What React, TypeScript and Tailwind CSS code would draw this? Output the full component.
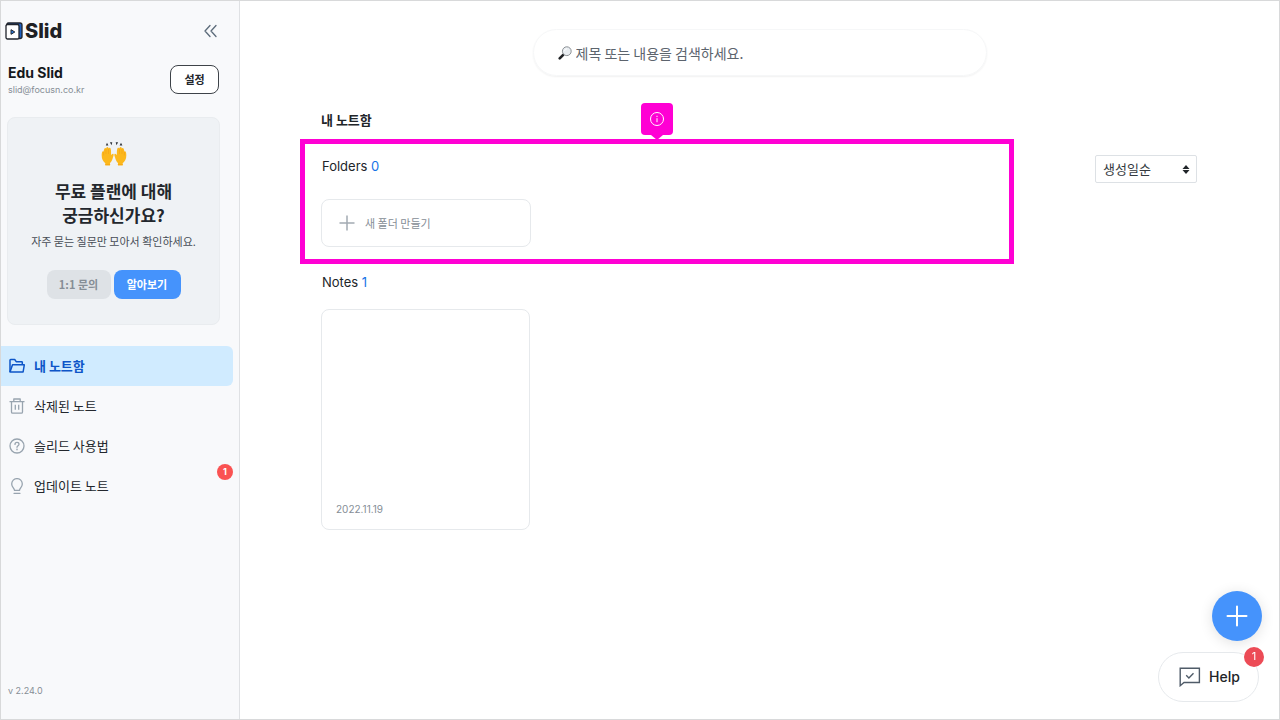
import React from 'react';

const LogoMark: React.FC = () => (
  <svg width="18" height="18" viewBox="0 0 18 18" fill="none" aria-hidden="true">
    <path d="M3.500 1h11.500q2 0 2 2v11.500q0 2-2 2H13V4H1.500Q1.500 1 3.500 1z" fill="#1d5fc0" stroke="#20242c" strokeWidth="1.300" strokeLinejoin="round" />
    <rect x="1" y="2.500" width="13" height="14.500" rx="1.500" fill="#fff" stroke="#20242c" strokeWidth="1.300" />
    <path d="M6 7.700v4.600l3.800-2.300z" fill="#2b7de0" stroke="#20242c" strokeWidth="1" strokeLinejoin="round" />
  </svg>
);

const CollapseIcon: React.FC = () => (
  <svg width="14" height="14" viewBox="0 0 14 14" fill="none" stroke="#5c6b7a" strokeWidth="1.300" strokeLinecap="round" strokeLinejoin="round" aria-hidden="true">
    <path d="M6 1.500 1 7l5 5.500M12 1.500 7 7l5 5.500" />
  </svg>
);

const RaisedHands: React.FC = () => (
  <svg width="26" height="26" viewBox="0 0 26 26" aria-hidden="true">
    <g fill="#30343a">
      <path d="m4.800 4.600 1.200-2.800 1.400 2.600zM8.900 1.200l2.400.1-.8 2.900zM14.700 1.300l2.400-.1-1.600 3zM18.600 4.400 20 1.800l1.400 2.800z" />
    </g>
    <path d="M4.300 24.500v-2.300C2.200 20.500.6 18 .7 14.500c0-1.800.1-3.300.8-4 .5-.5 1-.1 1.100.4.1-1.500.6-3.700 1.500-3.800.7-.1.9.4.9 1 .2-1.100.6-2 1.400-2 .8 0 1.100.8 1.100 1.600.3-.7.8-1.200 1.400-1 1.400.4 1.200 4.400 1.200 7.600.4-.7 1.200-1.800 2-1.600 1.100.3.3 2.200-.1 3.500-.6 2.300-1.500 4.500-3 5.800v2.500z" fill="#fcb81c" />
    <path d="M21.700 24.500v-2.300c2.100-1.700 3.700-4.200 3.600-7.700 0-1.800-.1-3.300-.8-4-.5-.5-1-.1-1.100.4-.1-1.500-.6-3.700-1.500-3.800-.7-.1-.9.4-.9 1-.2-1.100-.6-2-1.400-2-.8 0-1.100.8-1.100 1.600-.3-.7-.8-1.200-1.400-1-1.400.4-1.200 4.400-1.200 7.600-.4-.7-1.200-1.800-2-1.600-1.100.3-.3 2.200.1 3.500.6 2.300 1.500 4.500 3 5.800v2.500z" fill="#fcb81c" />
    <path d="M2.600 11v3M5 8.500v4M7.500 8v4.500M23.400 11v3M21 8.500v4M18.500 8v4.500M4.500 23.500h4.300M17.200 23.500h4.300" stroke="#f5a316" strokeWidth=".7" strokeLinecap="round" fill="none" />
  </svg>
);

const SearchGlass: React.FC = () => (
  <svg className="shrink-0" width="14" height="14" viewBox="0 0 14 14" fill="none" aria-hidden="true">
    <path d="M5.200 8.800 1.700 12.300" stroke="#202225" strokeWidth="2.600" strokeLinecap="round" />
    <circle cx="8.800" cy="5.200" r="4.400" fill="#e9edf1" stroke="#8b9095" strokeWidth="1" />
    <path d="M6.500 4.600a2.400 2.400 0 0 1 2.200-1.800" stroke="#fff" strokeWidth="1" strokeLinecap="round" />
  </svg>
);

const FolderIcon: React.FC = () => (
  <svg width="16" height="16" viewBox="0 0 16 16" fill="none" stroke="#0d55c8" strokeWidth="1.500" strokeLinejoin="round" aria-hidden="true">
    <path d="M1 14V2.200q0-.7.700-.7h4l1.500 2.200h5.500q.6 0 .6.600v2.500" />
    <path d="M1 14 3.500 6.800H15.300l-1.200 7.200z" />
  </svg>
);

const TrashIcon: React.FC = () => (
  <svg width="16" height="16" viewBox="0 0 16 16" fill="none" stroke="#98a4af" strokeWidth="1.300" strokeLinejoin="round" aria-hidden="true">
    <path d="M.5 3.700h15M4.800 3.500V1h6.400v2.500M2.500 3.700v10.300q0 1.200 1.200 1.200h8.600q1.200 0 1.200-1.200V3.700M6.300 6.700v5M9.700 6.700v5" />
  </svg>
);

const QuestionIcon: React.FC = () => (
  <svg width="16" height="16" viewBox="0 0 16 16" fill="none" stroke="#98a4af" strokeWidth="1.300" strokeLinecap="round" aria-hidden="true">
    <circle cx="8" cy="8" r="7" />
    <path d="M6 6.400c0-1.300.8-2 2-2s2 .7 2 1.800c0 1.400-2 1.500-2 3.100" />
    <circle cx="8" cy="11.400" r=".3" />
  </svg>
);

const BulbIcon: React.FC = () => (
  <svg width="16" height="16" viewBox="0 0 16 16" fill="none" stroke="#98a4af" strokeWidth="1.300" strokeLinecap="round" strokeLinejoin="round" aria-hidden="true">
    <path d="M5.500 12.400c0-2.100-2.800-3.300-2.800-6.500a5.300 5.300 0 0 1 10.600 0c0 3.200-2.800 4.400-2.800 6.500zM5 15.300h6" />
  </svg>
);

const InfoIcon: React.FC = () => (
  <svg width="16" height="16" viewBox="0 0 16 16" fill="none" stroke="#fff" strokeWidth="1" aria-hidden="true">
    <circle cx="8" cy="8" r="6.500" />
    <path d="M8 7.200v4M8 4.800v1.200" />
  </svg>
);

const ChatIcon: React.FC = () => (
  <svg width="22" height="20" viewBox="0 0 22 20" fill="none" stroke="#4f5b68" strokeWidth="1.400" aria-hidden="true">
    <path d="M1.200 1.200h19.200v14.300H5l-3.800 3.200z" />
    <path d="m7.200 8.300 2.700 2.600 4.600-4.600" />
  </svg>
);

const NAV_ITEMS = [
  { label: '내 노트함', icon: <FolderIcon />, active: true },
  { label: '삭제된 노트', icon: <TrashIcon /> },
  { label: '슬리드 사용법', icon: <QuestionIcon /> },
  { label: '업데이트 노트', icon: <BulbIcon />, badge: 1 },
];

const Sidebar: React.FC = () => (
  <aside className="flex w-[239px] shrink-0 flex-col border-r border-[#dfe1e4] bg-[#f8f9fb]">
    <div className="flex items-center justify-between pt-5 pr-[21px] pl-1">
      <a href="#" className="flex items-center gap-[2px] font-['Inter',sans-serif] text-xl leading-5 font-extrabold text-[#202124]">
        <LogoMark />
        Slid
      </a>
      <button type="button" aria-label="사이드바 접기">
        <CollapseIcon />
      </button>
    </div>

    <div className="mt-6 flex items-start justify-between pr-5 pl-[7px]">
      <div className="font-['Inter',sans-serif]">
        <p className="text-sm leading-4 font-bold text-[#15181c]">Edu Slid</p>
        <p className="mt-[2px] text-[9px] leading-[14px] text-[#868e96]">slid@focusn.co.kr</p>
      </div>
      <button type="button" className="h-[29px] w-[49px] rounded-lg border border-[#3e4349] bg-white text-[11px] font-bold text-[#23272d]">
        설정
      </button>
    </div>

    <section className="mt-5 mr-[19px] ml-[6px] flex flex-col items-center rounded-lg border border-[#e9ecef] bg-[#eff2f5] pt-[23px] pb-[25px] text-center">
      <RaisedHands />
      <h2 className="mt-3 text-[17px] leading-6 font-bold text-[#23272d]">
        무료 플랜에 대해
        <br />
        궁금하신가요?
      </h2>
      <p className="mt-1 text-[11px] leading-5 text-[#474d55]">자주 묻는 질문만 모아서 확인하세요.</p>
      <div className="mt-[19px] flex gap-[3px] text-[11px] font-bold">
        <button type="button" className="h-[29px] w-16 rounded-lg bg-[#dee2e6] text-[#868e96]">
          1:1 문의
        </button>
        <button type="button" className="h-[29px] w-[67px] rounded-lg bg-[#4593fc] text-white">
          알아보기
        </button>
      </div>
    </section>

    <nav className="mt-[21px] mr-[6px] flex flex-col">
      {NAV_ITEMS.map((item) => (
        <a
          key={item.label}
          href="#"
          className={`relative flex h-10 items-center gap-[9px] rounded-r-md pl-2 text-[13px] ${
            item.active ? 'bg-[#d0ebff] font-bold text-[#0d55c8]' : 'text-[#23272d]'
          }`}
        >
          {item.icon}
          {item.label}
          {item.badge && (
            <span className="absolute -top-[2px] right-0 flex size-4 items-center justify-center rounded-full bg-[#fa5252] font-['Inter',sans-serif] text-[9px] font-bold text-white">
              {item.badge}
            </span>
          )}
        </a>
      ))}
    </nav>

    <p className="mt-auto pb-5 pl-[7px] font-['Inter',sans-serif] text-[9px] leading-4 text-[#868e96]">v 2.24.0</p>
  </aside>
);

const Highlight: React.FC<{ children: React.ReactNode }> = ({ children }) => (
  <div className="relative h-[125px] border-5 border-[#ff00d4] px-4 pt-3">
    <div className="absolute -top-[41px] left-1/2 flex size-8 -translate-x-1/2 items-center justify-center rounded-sm bg-[#ff00d4]">
      <InfoIcon />
      <svg className="absolute top-full" width="12" height="5" viewBox="0 0 12 5" aria-hidden="true">
        <path d="M0 0h12L6 5z" fill="#ff00d4" />
      </svg>
    </div>
    {children}
  </div>
);

const SortSelect: React.FC = () => (
  <div className="relative mt-4 h-7 w-[102px] shrink-0">
    <select
      aria-label="정렬"
      className="h-full w-full appearance-none rounded-xs border border-[#dde1e5] bg-white pl-[7px] text-[13px] text-[#343a40]"
    >
      <option>생성일순</option>
      <option>제목순</option>
    </select>
    <svg className="pointer-events-none absolute top-[10px] right-[7px]" width="8" height="9" viewBox="0 0 8 9" fill="#212529" aria-hidden="true">
      <path d="M4 0l3.500 4h-7zM4 9L.5 5h7z" />
    </svg>
  </div>
);

const SectionTitle: React.FC<{ title: string; count: number }> = ({ title, count }) => (
  <h2 className="pl-px font-['Inter',sans-serif] text-[13px] leading-5">
    {title} <span className="text-[#1473e6]">{count}</span>
  </h2>
);

const App: React.FC = () => {
  return (
    <div className="flex min-h-screen border border-[#d8d9da] bg-white font-['Noto_Sans_CJK_KR',sans-serif] text-[#212529]">
      <Sidebar />

      <main className="flex-1">
        <label className="mx-auto mt-7 flex h-[47px] w-full max-w-[454px] items-center gap-1 rounded-full border border-[#f6f7f8] px-6 shadow-[0_1px_2px_rgba(0,0,0,0.06)]">
          <SearchGlass />
          <input
            type="search"
            aria-label="검색"
            placeholder="제목 또는 내용을 검색하세요."
            className="w-full bg-transparent text-sm outline-none placeholder:text-[#5c646d]"
          />
        </label>

        <div className="pr-[82px] pl-[60px]">
          <h1 className="mt-[34px] pl-[21px] text-[13px] leading-5 font-bold">내 노트함</h1>

          <div className="mt-[9px] flex items-start gap-[81px]">
            <div className="flex-1">
              <Highlight>
                <SectionTitle title="Folders" count={0} />
                <button
                  type="button"
                  className="mt-[23px] flex h-12 w-[210px] items-center gap-[10px] rounded-lg border border-[#e6e9ec] bg-white pl-[17px] text-[11px] text-[#868e96]"
                >
                  <svg width="16" height="16" viewBox="0 0 16 16" stroke="#a3abb3" strokeWidth="1.500" aria-hidden="true">
                    <path d="M8 .5v15M.5 8h15" />
                  </svg>
                  새 폴더 만들기
                </button>
              </Highlight>

              <section className="mt-2 pl-[21px]">
                <SectionTitle title="Notes" count={1} />
                <a href="#" className="mt-[17px] flex h-[221px] w-[209px] flex-col justify-end rounded-lg border border-[#e6e9ec] px-[14px] pb-3">
                  <time className="font-['Inter',sans-serif] text-[10px] leading-4 text-[#868e96]">2022.11.19</time>
                </a>
              </section>
            </div>
            <SortSelect />
          </div>
        </div>
      </main>

      <div className="fixed right-[21px] bottom-[18px] flex flex-col items-end gap-[11px] font-['Inter',sans-serif]">
        <button
          type="button"
          aria-label="새 노트"
          className="-mr-[3px] flex size-[50px] items-center justify-center rounded-full bg-[#4593fc] shadow-[0_2px_14px_rgba(0,0,0,0.12)]"
        >
          <svg width="22" height="22" viewBox="0 0 22 22" stroke="#fff" strokeWidth="2" strokeLinecap="round" aria-hidden="true">
            <path d="M11 1.500v19M1.500 11h19" />
          </svg>
        </button>
        <button
          type="button"
          className="relative flex h-[50px] w-[101px] items-center gap-2 rounded-full border border-[#e6e9ec] bg-white pl-[20px] text-sm font-medium"
        >
          <ChatIcon />
          Help
          <span className="absolute -top-[6px] -right-[6px] flex size-5 items-center justify-center rounded-full bg-[#ec4b56] text-[11px] font-normal text-white">
            1
          </span>
        </button>
      </div>
    </div>
  );
};

export default App;
